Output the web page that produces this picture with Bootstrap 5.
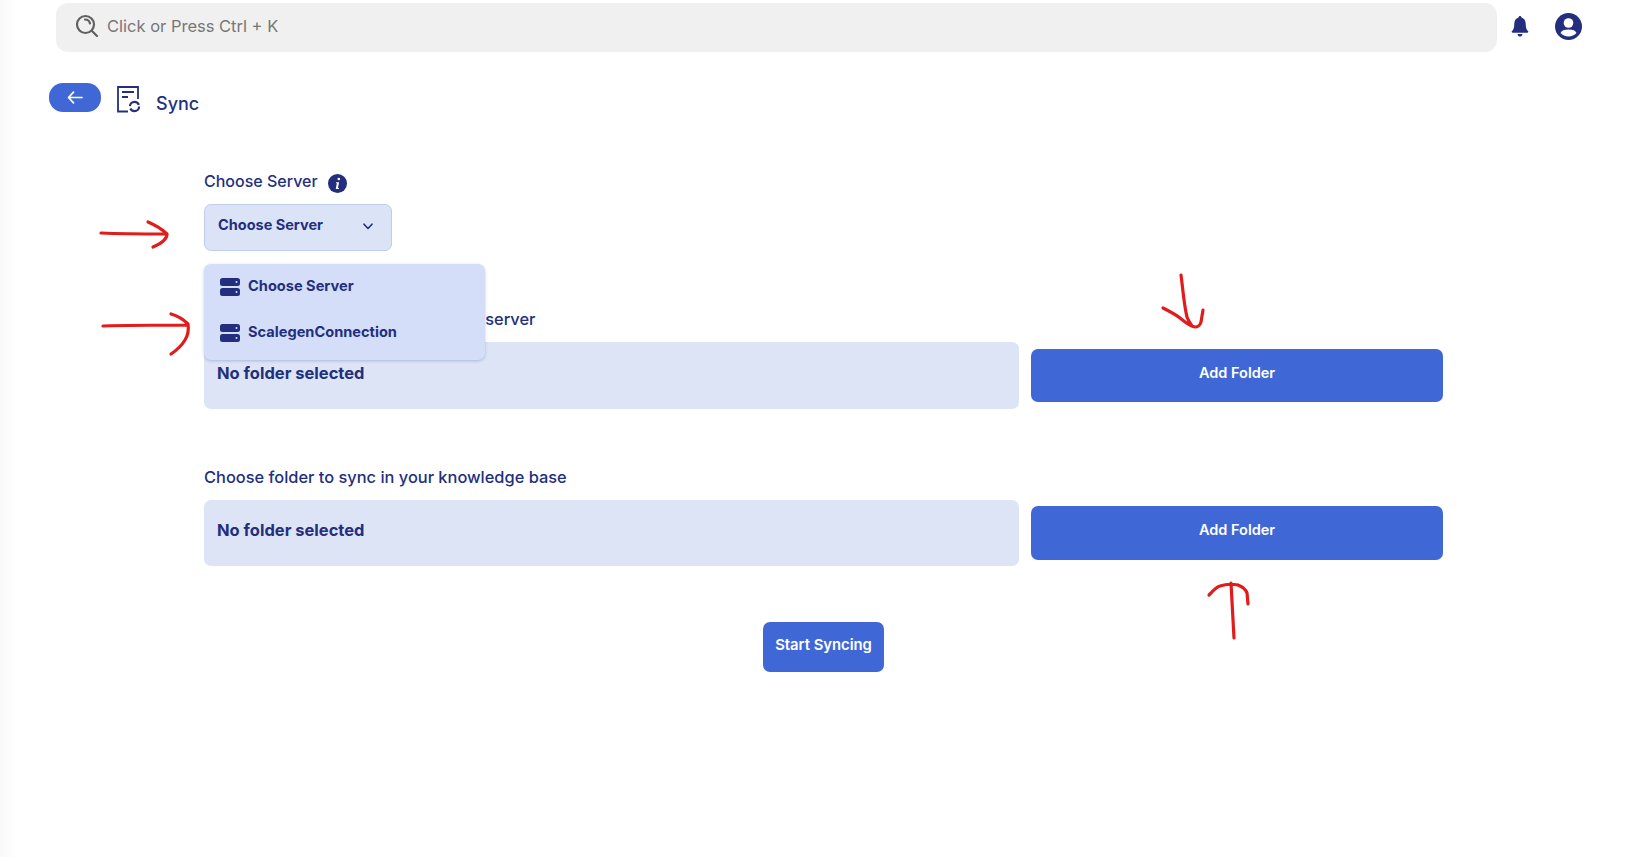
<!DOCTYPE html>
<html lang="en">
<head>
<meta charset="utf-8">
<title>Sync</title>
<link href="https://cdn.jsdelivr.net/npm/bootstrap@5.3.0/dist/css/bootstrap.min.css" rel="stylesheet">
<style>
html,body{height:100%}
body{font-family:"Inter","Noto Sans","Liberation Sans",sans-serif;color:#232f7e;background:#fff;overflow:hidden}
.app-shell{position:relative;height:857px;background:linear-gradient(90deg,#f8f8f8 0,#fdfdfd 12px,#fff 18px)}
.top-row{padding:3px 0 0 56px;height:83px}
.search-bar{width:1441px;height:49px;background:#f0f0f0;border-radius:12px;padding:0 0 3px 19px;color:#777;font-size:16.500px;gap:8px}
.top-bell{margin:13px 0 0 14px}
.top-user{margin:10px 0 0 26px}
.page-head{padding-left:49px;height:87px}
.back-btn{width:52px;height:29px;border-radius:14px;background:#3f68d6;border:0;padding:0 0 1px}
.back-btn:hover{background:#3f68d6}
.head-icon{margin:3px 0 0 16px}
.head-title{font-size:18px;font-weight:500;margin:9px 0 0 15px;line-height:24px}
.form-area{margin-left:204px;width:1239px}
.label-line{height:22px}
.field-label{font-size:16.400px;font-weight:500;line-height:22px}
.label-one{font-size:16px}
.info-dot{margin:4px 0 0 10px}
.sel-btn{width:188px;height:47px;margin-top:12px;background:#dbe4f7;border:1px solid #bfcdee;border-radius:7px;color:#232f7e;font-size:14.500px;font-weight:700;padding:0 18px 4px 13px;line-height:1}
.sel-btn:hover{background:#dbe4f7;color:#232f7e;border-color:#bfcdee}
.sel-chev{margin-top:2px}
.sel-menu{position:absolute;left:204px;top:264px;width:281px;height:96px;background:#d5def9;border-radius:7px;box-shadow:0 1px 3px rgba(60,80,140,.3);z-index:2;padding:0;border:0}
.menu-row{height:46px;padding-left:16px;gap:8px;font-size:14.600px;font-weight:700;color:#232f7e}
.menu-row span{padding-bottom:1px}
.label-two{margin-top:57px;word-spacing:1.500px}
.label-three{margin-top:57px}
.path-row{gap:12px;margin-top:12px}
.path-box{flex:1;height:66px;background:#dce4f6;border-radius:7px;padding:18px 13px;font-size:16.500px;font-weight:700;line-height:24px}
.path-first{height:67px;padding-top:19px}
.add-btn{width:412px;height:53px;margin-top:7px;background:#3f68d6;border:0;border-radius:7px;color:#fff;font-size:14.500px;font-weight:600;padding:0 0 6px}
.add-late{height:54px;margin-top:6px}
.add-btn:hover,.go-btn:hover{background:#3f68d6;color:#fff}
.go-wrap{margin-top:56px}
.go-btn{width:121px;height:50px;background:#3f68d6;border:0;border-radius:7px;color:#fff;font-size:14.800px;font-weight:600;padding:0 0 4px}
.scribbles{position:absolute;left:0;top:0;z-index:3;pointer-events:none}
</style>
</head>
<body>
<div class="app-shell">
  <div class="top-row d-flex align-items-start">
    <div class="search-bar d-flex align-items-center">
      <svg width="24" height="24" viewBox="0 0 24 24" fill="none" stroke="#606060" stroke-width="2.200" stroke-linecap="round"><circle cx="10.500" cy="10.500" r="8.500"/><path d="M10 5.500c2.500 0 4.500 1.500 5 4M17 17l5 5"/></svg>
      <span>Click or Press Ctrl + K</span>
    </div>
    <svg class="top-bell" width="18" height="21" viewBox="0 0 22 24" preserveAspectRatio="none" fill="#232f7e"><path d="M11 0c1 0 1.700.7 1.800 1.700 3.400.9 5.200 3.700 5.200 7.300 0 4 .8 6.200 3 8.500.4.500.2 1.500-.8 1.500H1.800c-1 0-1.200-1-.8-1.500C3.200 15.200 4 13 4 9c0-3.600 1.800-6.400 5.200-7.300C9.300.7 10 0 11 0zM8 20.500h6c0 1.700-1.300 3-3 3s-3-1.300-3-3z"/></svg>
    <svg class="top-user" width="27" height="27" viewBox="0 0 27 27"><circle cx="13.500" cy="13.500" r="13.500" fill="#232f7e"/><circle cx="13.500" cy="10" r="4.800" fill="#fff"/><path d="M5.500 20c1-2.500 3.500-3.500 8-3.500s7 1 8 3.500c-2 2.300-4.800 3.500-8 3.500s-6-1.200-8-3.500z" fill="#fff"/></svg>
  </div>

  <div class="page-head d-flex align-items-start">
    <button class="back-btn btn d-flex align-items-center justify-content-center" type="button" aria-label="Back">
      <svg width="16" height="13" viewBox="0 0 16 13" fill="none" stroke="#fff" stroke-width="1.700" stroke-linecap="round" stroke-linejoin="round"><path d="M15 6.500H1.500M6.500 1.200 1.500 6.500l5 5.300"/></svg>
    </button>
    <svg class="head-icon" width="24" height="27" viewBox="0 0 24 27" fill="none" stroke="#232f7e" stroke-width="1.800"><path d="M11 25.500H1V1h20v12"/><path d="M5 6h12M5 11h6" stroke-width="2"/><circle cx="17.500" cy="20.500" r="4.600" stroke-width="2.200" stroke-dasharray="12 2.500 12 2.500"/></svg>
    <div class="head-title">Sync</div>
  </div>

  <div class="form-area">
    <div class="label-line d-flex align-items-start">
      <label class="field-label label-one">Choose Server</label>
      <svg class="info-dot" width="19" height="19" viewBox="0 0 19 19"><circle cx="9.500" cy="9.500" r="9.500" fill="#232f7e"/><circle cx="10.800" cy="5" r="1.300" fill="#fff"/><path d="M8.200 8.200h2.900l-1.200 5.700h1.200l-.3 1.100H7.700l1.200-5.700H7.900z" fill="#fff"/></svg>
    </div>
    <button class="sel-btn btn d-flex align-items-center justify-content-between" type="button">
      <span>Choose Server</span>
      <svg class="sel-chev" width="10" height="7" viewBox="0 0 10 7" fill="none" stroke="#232f7e" stroke-width="1.600" stroke-linecap="round" stroke-linejoin="round"><path d="M1 1.200 5 5.500l4-4.300"/></svg>
    </button>

    <label class="field-label label-two d-block">Choose a folder to sync from your server</label>
    <div class="path-row d-flex align-items-start">
      <div class="path-box path-first">No folder selected</div>
      <button class="add-btn btn" type="button">Add Folder</button>
    </div>

    <label class="field-label label-three d-block">Choose folder to sync in your knowledge base</label>
    <div class="path-row d-flex align-items-start">
      <div class="path-box">No folder selected</div>
      <button class="add-btn add-late btn" type="button">Add Folder</button>
    </div>

    <div class="go-wrap d-flex justify-content-center">
      <button class="go-btn btn" type="button">Start Syncing</button>
    </div>
  </div>

  <div class="sel-menu">
    <div class="menu-row d-flex align-items-center">
      <svg width="20" height="18" viewBox="0 0 20 18"><path fill="#232f7e" fill-rule="evenodd" d="M2.500 0h15A2.500 2.500 0 0 1 20 2.500v3A2.500 2.500 0 0 1 17.500 8h-15A2.500 2.500 0 0 1 0 5.500v-3A2.500 2.500 0 0 1 2.500 0zm14 3a1 1 0 1 0 0 2 1 1 0 0 0 0-2zM2.500 10h15a2.500 2.500 0 0 1 2.500 2.500v3a2.500 2.500 0 0 1-2.500 2.500h-15A2.500 2.500 0 0 1 0 15.500v-3A2.500 2.500 0 0 1 2.500 10zm14 3a1 1 0 1 0 0 2 1 1 0 0 0 0-2z"/></svg>
      <span>Choose Server</span>
    </div>
    <div class="menu-row d-flex align-items-center">
      <svg width="20" height="18" viewBox="0 0 20 18"><path fill="#232f7e" fill-rule="evenodd" d="M2.500 0h15A2.500 2.500 0 0 1 20 2.500v3A2.500 2.500 0 0 1 17.500 8h-15A2.500 2.500 0 0 1 0 5.500v-3A2.500 2.500 0 0 1 2.500 0zm14 3a1 1 0 1 0 0 2 1 1 0 0 0 0-2zM2.500 10h15a2.500 2.500 0 0 1 2.500 2.500v3a2.500 2.500 0 0 1-2.500 2.500h-15A2.500 2.500 0 0 1 0 15.500v-3A2.500 2.500 0 0 1 2.500 10zm14 3a1 1 0 1 0 0 2 1 1 0 0 0 0-2z"/></svg>
      <span>ScalegenConnection</span>
    </div>
  </div>

  <svg class="scribbles" width="1632" height="857" viewBox="0 0 1632 857" fill="none" stroke="#e21b1b" stroke-width="3.200" stroke-linecap="round" stroke-linejoin="round">
    <path d="M101 233c22 1 44 1 66 1M148 222c7 3 14 7 19 12 0 5-7 10-14 13"/>
    <path d="M103 326c29-1 57-1 85-1M171 314c7 2 13 6 17 10 1 6 0 11-3 16-3 5-8 10-14 14"/>
    <path d="M1181 275c2 15 3 30 6 42 1 3 3 6 5 9M1163 308c6 3 12 6 17 10 5 4 9 8 15 9 4 0 5-2 6-5l2-12"/>
    <path d="M1234 638c-1-18-2-37-3-55M1209 595c3-3 7-8 11-9 6-2 13-2 18-1 5 2 8 5 9 8l1 11"/>
  </svg>
</div>
<script src="https://cdn.jsdelivr.net/npm/bootstrap@5.3.0/dist/js/bootstrap.bundle.min.js"></script>
</body>
</html>
